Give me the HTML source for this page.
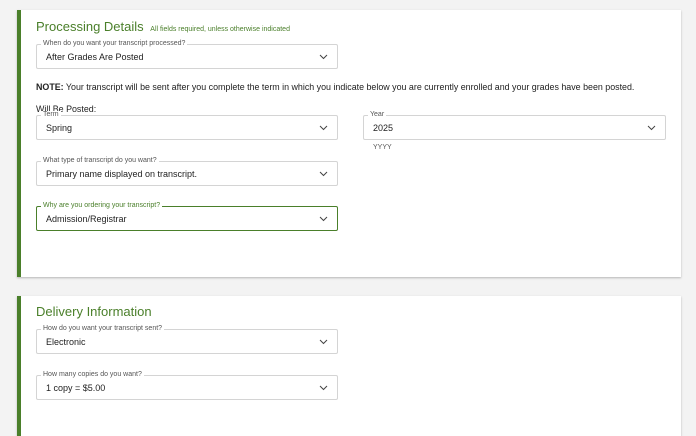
<!DOCTYPE html>
<html><head><meta charset="utf-8"><style>
*{box-sizing:border-box;margin:0;padding:0}
body{width:696px;height:420px;background:#f3f3f3;font-family:"Liberation Sans",sans-serif;position:relative;overflow:hidden;color:#222}
.card{position:absolute;left:17px;width:664px;background:#fff;border-left:4px solid #4a7f2a;box-shadow:0 1px 2px rgba(0,0,0,.25)}
.f{position:absolute;height:25px;border:1px solid #d4d4d4;border-radius:2px;background:#fff}
.f .l{position:absolute;top:-5px;left:4px;background:#fff;padding:0 2px;font-size:7px;color:#555;line-height:8px}
.f .v{position:absolute;left:9px;top:7px;font-size:9px;color:#222}
.f svg{position:absolute;right:9px;top:9px}
.g{border-color:#4a7f2a}
.g .l{color:#4a7f2a}
.abs{position:absolute}
</style></head><body>
<div class="card" style="top:10px;height:267px"></div>
<div class="card" style="top:296px;height:140px"></div>

<div class="abs" style="left:36px;top:19px;font-size:13px;color:#4a7f2a">Processing Details <span style="font-size:7px;margin-left:3px">All fields required, unless otherwise indicated</span></div>

<div class="f" style="left:36px;top:44px;width:302px"><span class="l">When do you want your transcript processed?</span><span class="v">After Grades Are Posted</span><svg width="9" height="6" viewBox="0 0 9 6"><path d="M1 1l3.5 3.5L8 1" fill="none" stroke="#444" stroke-width="1"/></svg></div>

<div class="abs" style="left:36px;top:82px;font-size:8.9px;color:#222;white-space:nowrap"><b>NOTE:</b> Your transcript will be sent after you complete the term in which you indicate below you are currently enrolled and your grades have been posted.</div>
<div class="abs" style="left:36px;top:104px;font-size:8.9px">Will Be Posted:</div>

<div class="f" style="left:36px;top:115px;width:302px"><span class="l">Term</span><span class="v">Spring</span><svg width="9" height="6" viewBox="0 0 9 6"><path d="M1 1l3.5 3.5L8 1" fill="none" stroke="#444" stroke-width="1"/></svg></div>
<div class="f" style="left:363px;top:115px;width:303px"><span class="l">Year</span><span class="v">2025</span><svg width="9" height="6" viewBox="0 0 9 6"><path d="M1 1l3.5 3.5L8 1" fill="none" stroke="#444" stroke-width="1"/></svg></div>
<div class="abs" style="left:373px;top:144px;font-size:7px;color:#555">YYYY</div>

<div class="f" style="left:36px;top:161px;width:302px"><span class="l">What type of transcript do you want?</span><span class="v">Primary name displayed on transcript.</span><svg width="9" height="6" viewBox="0 0 9 6"><path d="M1 1l3.5 3.5L8 1" fill="none" stroke="#444" stroke-width="1"/></svg></div>
<div class="f g" style="left:36px;top:206px;width:302px"><span class="l">Why are you ordering your transcript?</span><span class="v">Admission/Registrar</span><svg width="9" height="6" viewBox="0 0 9 6"><path d="M1 1l3.5 3.5L8 1" fill="none" stroke="#444" stroke-width="1"/></svg></div>

<div class="abs" style="left:36px;top:304px;font-size:13px;color:#4a7f2a">Delivery Information</div>
<div class="f" style="left:36px;top:329px;width:302px"><span class="l">How do you want your transcript sent?</span><span class="v">Electronic</span><svg width="9" height="6" viewBox="0 0 9 6"><path d="M1 1l3.5 3.5L8 1" fill="none" stroke="#444" stroke-width="1"/></svg></div>
<div class="f" style="left:36px;top:375px;width:302px"><span class="l">How many copies do you want?</span><span class="v">1 copy = $5.00</span><svg width="9" height="6" viewBox="0 0 9 6"><path d="M1 1l3.5 3.5L8 1" fill="none" stroke="#444" stroke-width="1"/></svg></div>
</body></html>
